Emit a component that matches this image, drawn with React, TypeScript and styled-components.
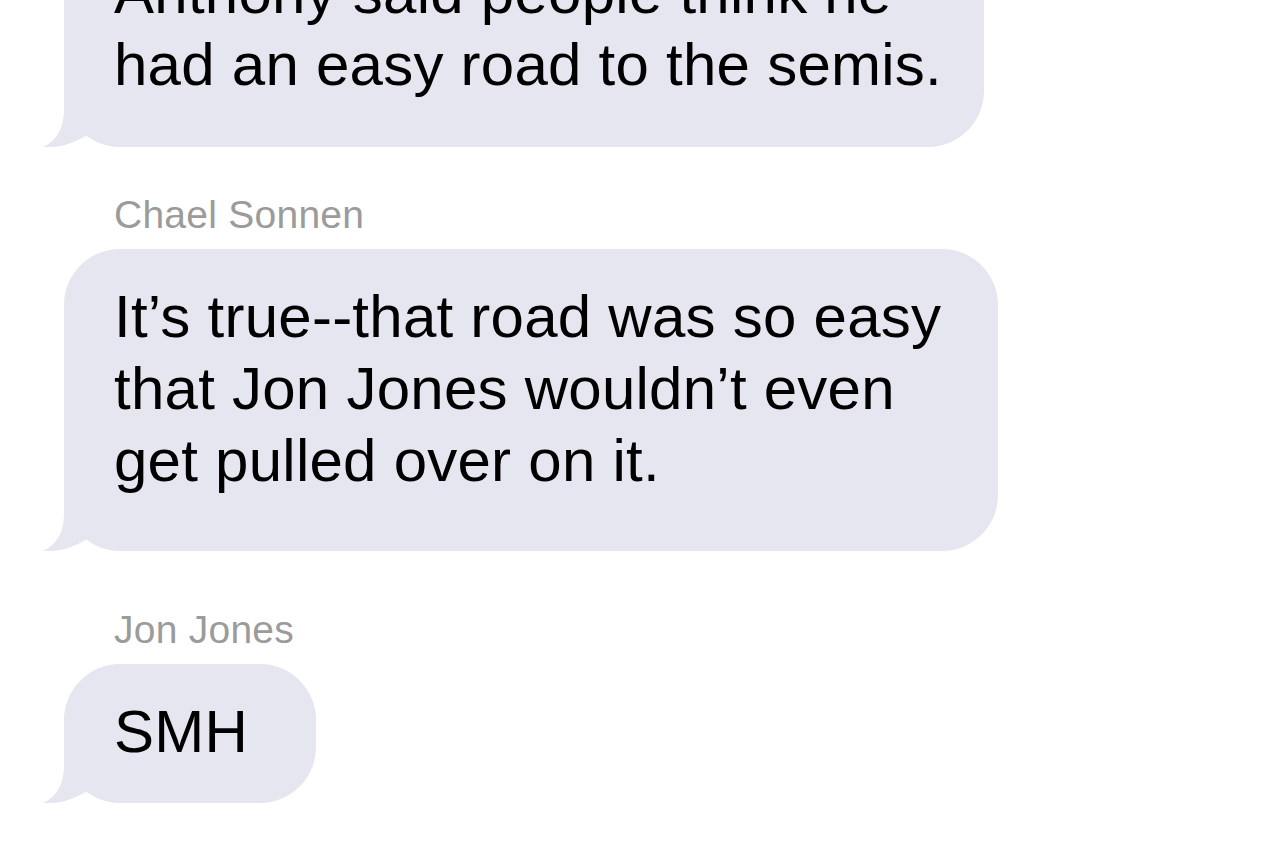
import React from "react";
import styled, { createGlobalStyle } from "styled-components";

const GlobalStyle = createGlobalStyle`
    html, body {
        margin: 0;
        padding: 0;
        background: #ffffff;
        overflow: hidden;
    }
    body {
        font-family: "Liberation Sans", Arial, Helvetica, sans-serif;
    }
`;

const Thread = styled.div`
    display: flex;
    flex-direction: column;
    align-items: flex-start;
    padding-left: 64px;
    margin-top: -75px;
`;

const Group = styled.div<{ $gap: number }>`
    display: flex;
    flex-direction: column;
    align-items: flex-start;
    margin-top: ${(p) => p.$gap}px;
`;

const SenderName = styled.div`
    padding-left: 50px;
    margin-bottom: 10px;
    font-size: 39px;
    line-height: 48px;
    letter-spacing: 0.25px;
    color: #9b9b9b;
`;

const Bubble = styled.div<{ $width: number; $padBottom: number }>`
    position: relative;
    box-sizing: border-box;
    width: ${(p) => p.$width}px;
    padding: 32px 0 ${(p) => p.$padBottom}px 50px;
    background: #e5e6ef;
    border-radius: 56px;
    color: #000000;
    font-size: 60px;
    line-height: 72px;
    letter-spacing: 0.25px;
`;

const Line = styled.span`
    display: block;
    white-space: nowrap;
`;

// the little tail at the bottom left of each incoming bubble
const TailSvg = styled.svg`
    position: absolute;
    left: -22px;
    bottom: 0;
    width: 60px;
    height: 70px;
`;

const Tail = () => (
    <TailSvg viewBox="0 0 60 70">
        <path d="M22 0 L22 33 C22 52 14 64 1 70 C18 71 34 66 48 56 L58 0 Z" fill="#e5e6ef" />
    </TailSvg>
);

interface Message {
    sender?: string;
    lines: string[];
    width: number;
    padBottom: number;
    gap: number;
}

const messages: Message[] = [
    {
        lines: ["Anthony said people think he", "had an easy road to the semis."],
        width: 920,
        padBottom: 46,
        gap: 0,
    },
    {
        sender: "Chael Sonnen",
        lines: ["It\u2019s true--that road was so easy", "that Jon Jones wouldn\u2019t even", "get pulled over on it."],
        width: 934,
        padBottom: 54,
        gap: 44,
    },
    {
        sender: "Jon Jones",
        lines: ["SMH"],
        width: 252,
        padBottom: 35,
        gap: 55,
    },
];

const App: React.FC = () => {
    return (
        <>
            <GlobalStyle />
            <Thread>
                {messages.map((m, i) => (
                    <Group key={i} $gap={m.gap}>
                        {m.sender && <SenderName>{m.sender}</SenderName>}
                        <Bubble $width={m.width} $padBottom={m.padBottom}>
                            {m.lines.map((l, j) => (
                                <Line key={j}>{l}</Line>
                            ))}
                            <Tail />
                        </Bubble>
                    </Group>
                ))}
            </Thread>
        </>
    );
};

export default App;
